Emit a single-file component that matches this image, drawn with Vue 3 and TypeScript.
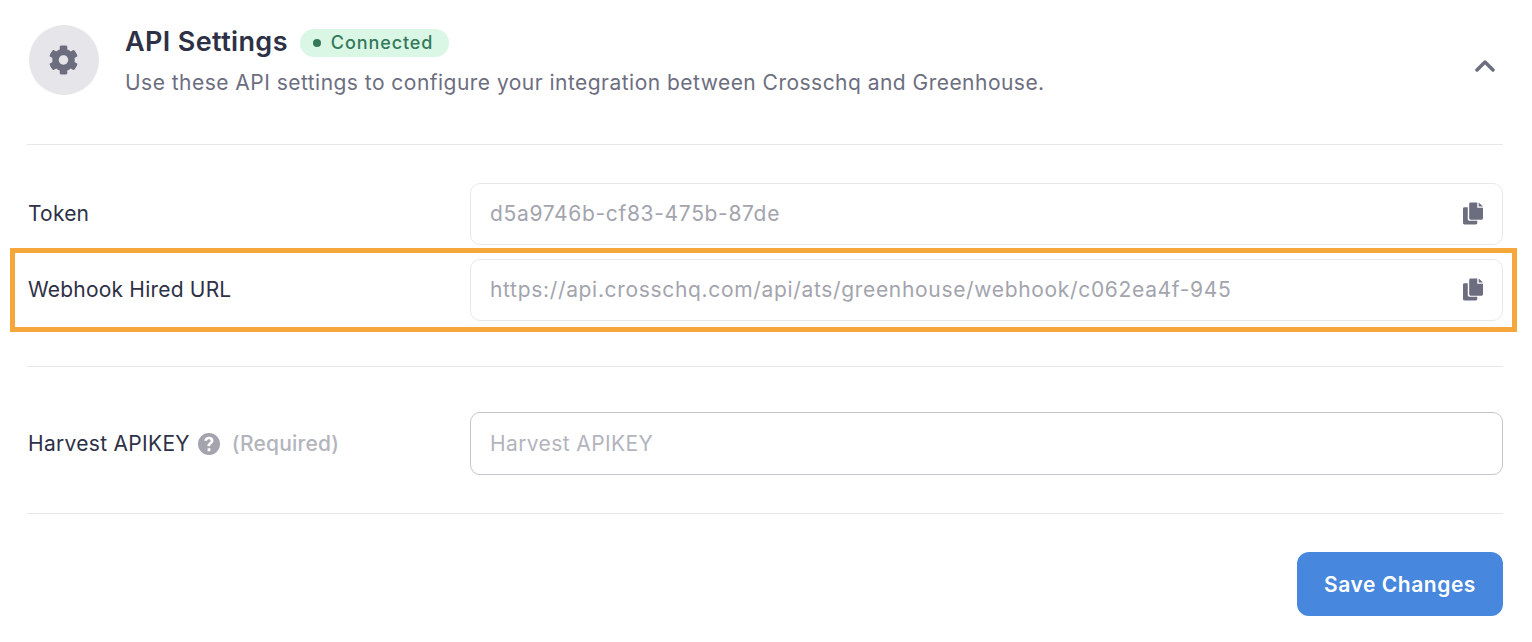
<script setup lang="ts">
const rows = [
  { label: 'Token', value: 'd5a9746b-cf83-475b-87de', highlight: false },
  { label: 'Webhook Hired URL', value: 'https://api.crosschq.com/api/ats/greenhouse/webhook/c062ea4f-945', highlight: true },
]
</script>

<template>
  <main class="page">
    <header class="head">
      <div class="avatar">
        <svg class="gear" viewBox="0 0 512 512" aria-hidden="true">
          <path d="M487.4 315.7l-42.6-24.600c4.300-23.200 4.300-47 0-70.200l42.600-24.600c4.900-2.800 7.100-8.600 5.500-14-11.100-35.600-30-67.800-54.700-94.600-3.800-4.100-10-5.100-14.800-2.300L380.800 110c-17.900-15.400-38.500-27.300-60.800-35.100V25.800c0-5.600-3.900-10.500-9.400-11.700-36.700-8.200-74.300-7.800-109.200 0-5.500 1.200-9.400 6.100-9.400 11.700V75c-22.200 7.900-42.800 19.800-60.800 35.100L88.700 85.500c-4.900-2.800-11-1.900-14.800 2.300-24.700 26.700-43.600 58.900-54.700 94.600-1.700 5.400.6 11.200 5.500 14L67.300 221c-4.300 23.200-4.300 47 0 70.200l-42.600 24.600c-4.900 2.800-7.100 8.600-5.500 14 11.100 35.600 30 67.800 54.700 94.600 3.800 4.100 10 5.100 14.800 2.300l42.600-24.600c17.900 15.400 38.500 27.300 60.800 35.100v49.200c0 5.600 3.900 10.500 9.400 11.700 36.700 8.200 74.300 7.800 109.200 0 5.500-1.200 9.400-6.100 9.400-11.700v-49.200c22.200-7.900 42.800-19.800 60.800-35.100l42.600 24.600c4.900 2.800 11 1.900 14.800-2.300 24.700-26.700 43.600-58.900 54.700-94.600 1.500-5.500-.7-11.300-5.600-14.100zM256 336c-44.100 0-80-35.900-80-80s35.900-80 80-80 80 35.900 80 80-35.900 80-80 80z" />
        </svg>
      </div>
      <div class="head-text">
        <div class="title-row">
          <h1>API Settings</h1>
          <span class="badge"><i class="dot"></i>Connected</span>
        </div>
        <p>Use these API settings to configure your integration between Crosschq and Greenhouse.</p>
      </div>
      <svg class="chevron" viewBox="0 0 20 12" aria-hidden="true">
        <path d="M2 10l8-8 8 8" />
      </svg>
    </header>

    <section class="readonly">
      <div v-for="row in rows" :key="row.label" class="row" :class="{ highlighted: row.highlight }">
        <label>{{ row.label }}</label>
        <div class="field">
          <span class="value">{{ row.value }}</span>
          <svg class="copy" viewBox="0 0 21 23" aria-hidden="true">
            <path d="M5 5H1.500A1.500 1.500 0 0 0 0 6.500v15A1.500 1.500 0 0 0 1.500 23H13.500A1.500 1.500 0 0 0 15 21.500V19H6.500A1.500 1.500 0 0 1 5 17.500z" />
            <path d="M6.500 1.500A1.500 1.500 0 0 1 8 0h7v5.500h6v11a1.500 1.500 0 0 1-1.500 1.500H8a1.500 1.500 0 0 1-1.500-1.500z" />
            <path d="M16.500 0 21 4.200h-4.500z" />
          </svg>
        </div>
      </div>
    </section>

    <section class="harvest">
      <div class="row">
        <label class="harvest-label">
          Harvest APIKEY
          <svg class="help" viewBox="0 0 22 22" aria-hidden="true">
            <path fill-rule="evenodd" d="M11 0a11 11 0 1 1 0 22 11 11 0 0 1 0-22zm-1.400 15.300v2.900h2.800v-2.900zM11 3.800c-2.600 0-4.500 1.500-4.700 4h2.800c.1-1 .8-1.500 1.800-1.500s1.700.6 1.700 1.400c0 .8-.4 1.200-1.300 1.800-1.300.8-1.900 1.700-1.800 3.200v.6h2.700v-.4c0-.9.3-1.300 1.300-1.900 1.200-.8 2-1.800 2-3.400 0-2.300-1.900-3.800-4.500-3.800z" />
          </svg>
          <span class="required">(Required)</span>
        </label>
        <input class="input" type="text" placeholder="Harvest APIKEY" />
      </div>
    </section>

    <footer class="foot">
      <button type="button" class="save">Save Changes</button>
    </footer>
  </main>
</template>

<style>
html, body { margin: 0; background: #fff; }
</style>

<style scoped>
.page {
  box-sizing: border-box;
  width: 1532px;
  height: 642px;
  padding: 25px 29px 0 27px;
  font-family: Inter, "Liberation Sans", sans-serif;
  color: #2e3146;
  overflow: hidden;
}
.head {
  display: flex;
  align-items: flex-start;
  height: 119px;
  border-bottom: 1px solid #e8e8ec;
  padding-left: 2px;
}
.avatar {
  flex: none;
  width: 70px;
  height: 70px;
  border-radius: 50%;
  background: #e6e6ea;
  display: flex;
  align-items: center;
  justify-content: center;
}
.gear { width: 30px; height: 30px; fill: #6c6e80; transform: translateX(-0.5px); }
.head-text { margin-left: 26px; flex: 1; }
.title-row { display: flex; align-items: center; gap: 12px; height: 34px; }
h1 { margin: 0; font-size: 27px; font-weight: 600; line-height: 32px; color: #2e3146; letter-spacing: 0.37px; }
.badge {
  display: inline-flex;
  align-items: center;
  height: 28px;
  padding: 0 16px 0 13px;
  border-radius: 14px;
  background: #daf7e6;
  color: #33795a;
  font-size: 18px;
  font-weight: 500;
  letter-spacing: 0.9px;
  margin-top: 1px;
}
.dot { width: 8px; height: 8px; border-radius: 50%; background: #33795a; margin-right: 10px; }
p { margin: 10px 0 0; font-size: 21px; line-height: 28px; color: #6c6e80; letter-spacing: 0.47px; }
.chevron { width: 20px; height: 12px; margin: 35px 8px 0 0; fill: none; stroke: #6c6e80; stroke-width: 3.500; stroke-linecap: round; stroke-linejoin: round; }
.readonly {
  display: flex;
  flex-direction: column;
  gap: 14px;
  padding: 38px 0 45px;
  border-bottom: 1px solid #e8e8ec;
}
.row { display: flex; align-items: center; position: relative; }
.row.highlighted::after {
  content: "";
  position: absolute;
  left: -17px;
  right: -14px;
  top: -11px;
  bottom: -11px;
  border: 5px solid #f6a73b;
  pointer-events: none;
}
label {
  flex: none;
  width: 443px;
  padding-left: 1px;
  box-sizing: border-box;
  font-size: 21px;
  line-height: 28px;
  letter-spacing: 0.2px;
  color: #2e3146;
}
.field {
  flex: 1;
  height: 62px;
  box-sizing: border-box;
  border: 1px solid #e8e8ec;
  border-radius: 10px;
  display: flex;
  align-items: center;
  justify-content: space-between;
  padding: 0 19px;
  background: #fff;
}
.value { font-size: 21px; line-height: 26px; margin-top: -1px; color: #a3a4ae; letter-spacing: 0.67px; }
.copy { width: 20px; height: 23px; fill: #6c6e80; margin-top: -1px; }
.harvest { padding: 45px 0 38px; border-bottom: 1px solid #e8e8ec; }
.harvest-label { display: flex; align-items: center; letter-spacing: 0.3px; }
.help { width: 22px; height: 22px; fill: #a3a4ae; margin-left: 8px; }
.required { color: #b3b4bd; font-weight: 500; margin-left: 12px; letter-spacing: 0.2px; }
.input {
  flex: 1;
  min-width: 0;
  height: 63px;
  box-sizing: border-box;
  border: 1px solid #c5c6cd;
  border-radius: 10px;
  padding: 0 19px;
  font: inherit;
  font-size: 21px;
  letter-spacing: 0.4px;
  outline: none;
}
.input::placeholder { color: #b3b4bd; opacity: 1; }
.foot { display: flex; justify-content: flex-end; padding-top: 38px; }
.save {
  width: 206px;
  height: 64px;
  border: 0;
  border-radius: 12px;
  background: #4787dd;
  color: #fff;
  font-family: inherit;
  font-size: 21px;
  font-weight: 600;
  letter-spacing: 0.55px;
}
</style>
